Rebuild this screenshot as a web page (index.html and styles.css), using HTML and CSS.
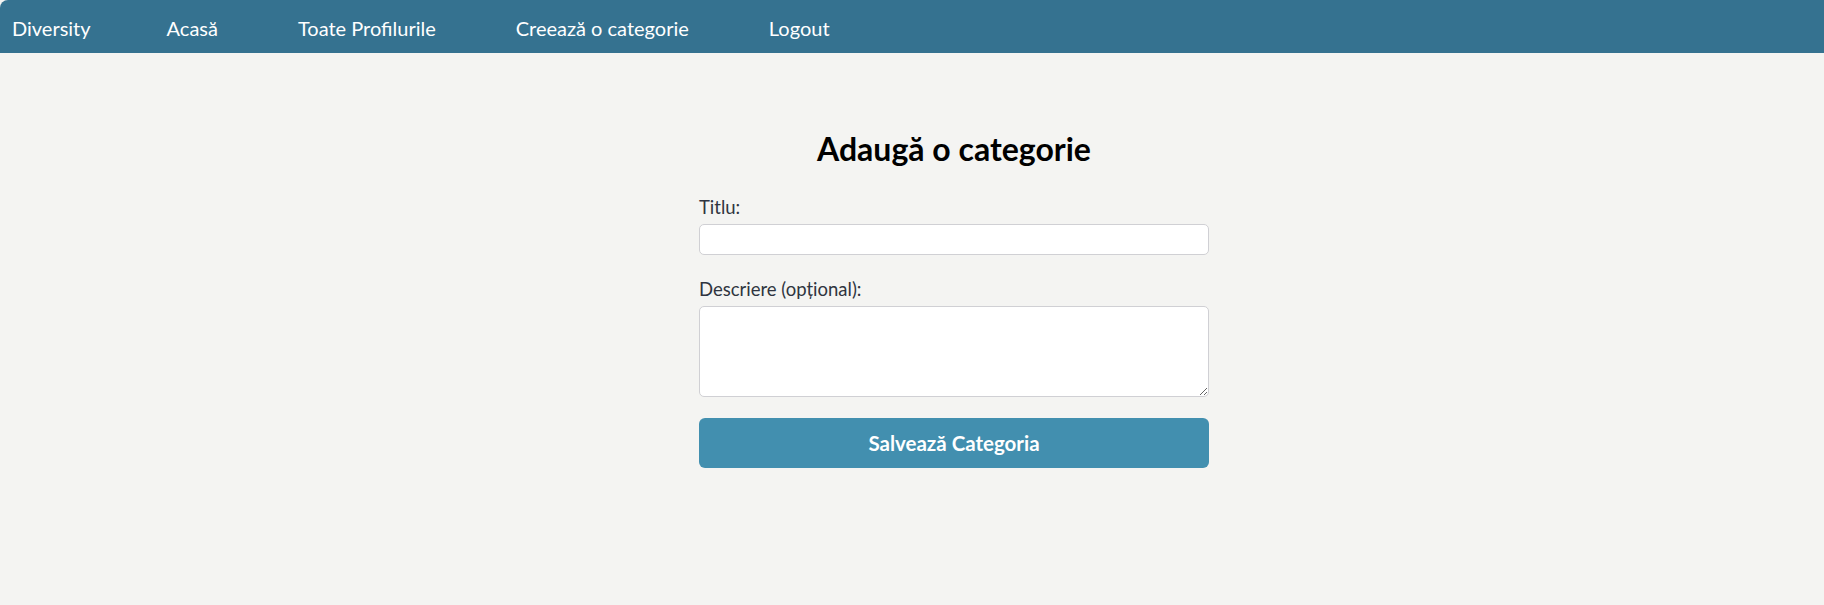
FILE: index.html
```html
<!DOCTYPE html>
<html lang="ro">
<head>
<meta charset="utf-8">
<title>Adaugă o categorie</title>
<link rel="stylesheet" href="styles.css">
</head>
<body>
<nav class="topnav">
  <a class="nav-link nav-brand" href="#">Diversity</a>
  <a class="nav-link" href="#">Acasă</a>
  <a class="nav-link" href="#">Toate Profilurile</a>
  <a class="nav-link" href="#">Creează o categorie</a>
  <a class="nav-link" href="#">Logout</a>
</nav>
<main class="page">
  <section class="card">
    <h1 class="card-title">Adaugă o categorie</h1>
    <form class="form">
      <div class="field">
        <label class="field-label" for="titlu">Titlu:</label>
        <input class="field-input" id="titlu" type="text">
      </div>
      <div class="field">
        <label class="field-label" for="descriere">Descriere (opțional):</label>
        <textarea class="field-textarea" id="descriere"></textarea>
      </div>
      <button class="submit-btn" type="button">Salvează Categoria</button>
    </form>
  </section>
</main>
</body>
</html>
```

FILE: styles.css
```css
* { box-sizing: border-box; }

html, body {
  margin: 0;
  padding: 0;
}

body {
  background: #f4f4f2;
  font-family: Lato, "Open Sans", sans-serif;
  color: #333;
  min-height: 605px;
}

.topnav {
  display: flex;
  align-items: center;
  gap: 80px;
  height: 53px;
  padding: 2px 12px 0 12px;
  background: #357290;
  border-top-left-radius: 8px;
}

.nav-link {
  color: #ffffff;
  text-decoration: none;
  font-size: 20px;
  line-height: 24px;
}

.nav-brand {
  margin-right: -4px;
}

.page {
  padding: 76px 0 0 84px;
}

.card {
  width: 510px;
  margin: 0 auto;
}

.card-title {
  margin: 0 0 26px;
  text-align: center;
  font-size: 32px;
  line-height: 40px;
  font-weight: 700;
  color: #000;
}

.form {
  display: flex;
  flex-direction: column;
}

.field {
  display: flex;
  flex-direction: column;
  gap: 5px;
  margin-bottom: 22px;
}

.field:nth-child(2) {
  margin-bottom: 21px;
}

.field-label {
  font-size: 18.5px;
  line-height: 24px;
  color: #2f3440;
}

.field-input {
  display: block;
  width: 100%;
  height: 31px;
  border: 1px solid #d0d0d4;
  border-radius: 5px;
  background: #fff;
  font: inherit;
}

.field-textarea {
  display: block;
  width: 100%;
  height: 91px;
  border: 1px solid #d0d0d4;
  border-radius: 5px;
  background: #fff;
  font: inherit;
  resize: both;
}

.submit-btn {
  display: block;
  width: 100%;
  height: 50px;
  border: 0;
  border-radius: 6px;
  background: #428faf;
  color: #fff;
  font-family: inherit;
  font-size: 20.5px;
  font-weight: 700;
}
```
